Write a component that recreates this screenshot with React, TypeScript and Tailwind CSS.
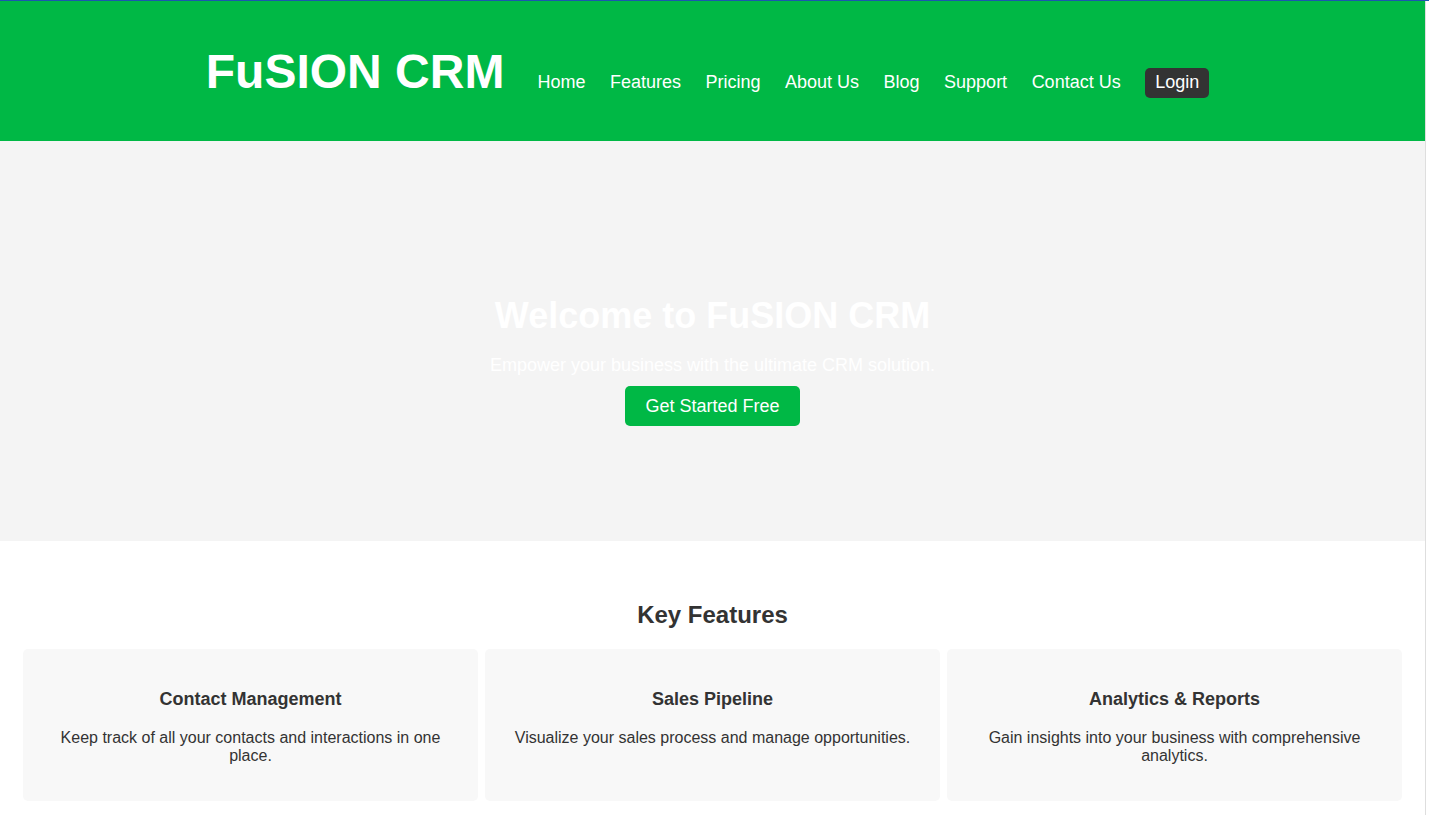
import React from 'react'

const navItems = ['Home', 'Features', 'Pricing', 'About Us', 'Blog', 'Support', 'Contact Us']

const features = [
  {
    title: 'Contact Management',
    text: 'Keep track of all your contacts and interactions in one place.',
  },
  {
    title: 'Sales Pipeline',
    text: 'Visualize your sales process and manage opportunities.',
  },
  {
    title: 'Analytics & Reports',
    text: 'Gain insights into your business with comprehensive analytics.',
  },
]

function Header() {
  return (
    <header className="bg-[#00b845] pt-[11px] pb-[10px] pr-[10px]">
      <div className="flex items-baseline justify-center">
        <h1 className="my-[32px] mr-[33px] text-[48px] font-bold leading-[55px] text-white">FuSION CRM</h1>
        <nav>
          <ul className="flex items-baseline gap-[24.5px] text-[18px] text-white">
            {navItems.map((item) => (
              <li key={item}>
                <a href="#" className="leading-[21px]">
                  {item}
                </a>
              </li>
            ))}
            <li>
              <a href="#" className="block rounded-[5px] bg-[#333333] px-[10px] py-[4.5px] leading-[21px] text-white">
                Login
              </a>
            </li>
          </ul>
        </nav>
      </div>
    </header>
  )
}

function Hero() {
  return (
    <section className="flex h-[400px] flex-col items-center bg-[#f4f4f4] pt-[154px] text-center text-white">
      <h2 className="text-[36px] font-bold leading-[41px]">Welcome to FuSION CRM</h2>
      <p className="mt-[18.5px] text-[18px] leading-[21px]">Empower your business with the ultimate CRM solution.</p>
      <a href="#" className="mt-[10.5px] rounded-[5px] bg-[#00b845] px-[20.5px] py-[10px] text-[18px] leading-5 text-white">
        Get Started Free
      </a>
    </section>
  )
}

function Features() {
  return (
    <section className="bg-white px-[23px] pt-[60px] pb-[14px] text-[#333333]">
      <h2 className="text-center text-[24px] font-bold leading-[28px]">Key Features</h2>
      <div className="mt-[20px] grid grid-cols-3 gap-[7px]">
        {features.map((f) => (
          <div key={f.title} className="rounded-[5px] bg-[#f8f8f8] px-[20px] pt-[40px] pb-[36px] text-center">
            <h3 className="text-[18px] font-bold leading-[21px]">{f.title}</h3>
            <p className="mt-[19px] text-[16px] leading-[18px]">{f.text}</p>
          </div>
        ))}
      </div>
    </section>
  )
}

export default function App() {
  return (
    <div className="min-h-screen border-t border-[#1c56b0] bg-white font-['Liberation_Sans',Arial,sans-serif]">
      <div className="flex">
        <main className="min-w-0 flex-1">
          <Header />
          <Hero />
          <Features />
        </main>
        {/* scrollbar track */}
        <div className="w-[4px] shrink-0 border-l border-[#dedede] bg-white" />
      </div>
    </div>
  )
}
